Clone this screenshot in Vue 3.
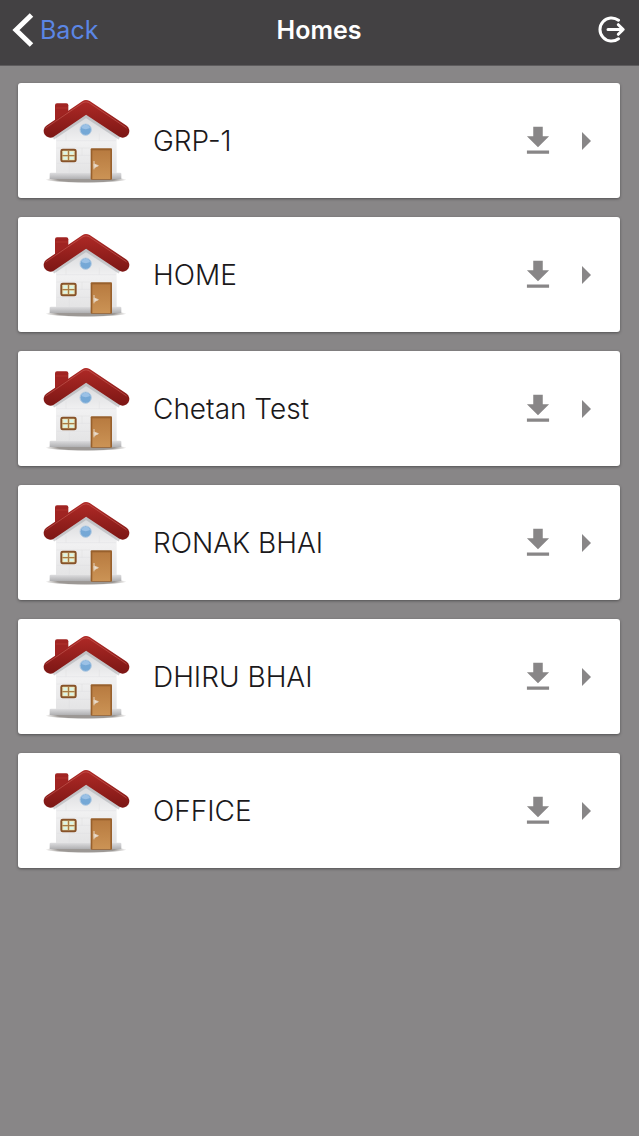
<template>
    <div class="app-container">
        <header class="top-bar">
            <button type="button" class="back-btn" @click="handleBack">
                <svg class="back-icon" viewBox="0 0 22 36" aria-hidden="true">
                    <path d="M19.500 3 4 18l15.500 15" />
                </svg>
                <span>Back</span>
            </button>
            <h1 class="page-title">Homes</h1>
            <button type="button" class="logout-btn" aria-label="Log out" @click="handleLogout">
                <svg viewBox="0 0 28 28" aria-hidden="true">
                    <path d="M20.500 4.200A11.600 11.600 0 1 0 20.500 22.800" />
                    <path d="M10 13.500H25M20.300 8.700l4.900 4.800-4.900 4.800" />
                </svg>
            </button>
        </header>

        <main class="home-list">
            <article v-for="home in homes" :key="home.id" class="home-card">
                <svg class="home-icon" viewBox="21 19 264 264" aria-hidden="true">
                    <defs>
                        <linearGradient :id="`roof-${home.id}`" gradientUnits="userSpaceOnUse" x1="0" y1="27" x2="0"
                            y2="144">
                            <stop offset="0" stop-color="#b02a27" />
                            <stop offset="1" stop-color="#7b1614" />
                        </linearGradient>
                        <linearGradient :id="`wall-${home.id}`" x1="0" y1="0" x2="0" y2="1">
                            <stop offset="0" stop-color="#d3d4d7" />
                            <stop offset="0.500" stop-color="#f1f1f2" />
                            <stop offset="1" stop-color="#e4e4e5" />
                        </linearGradient>
                        <linearGradient :id="`base-${home.id}`" x1="0" y1="0" x2="0" y2="1">
                            <stop offset="0" stop-color="#dedee0" />
                            <stop offset="1" stop-color="#b0b0b2" />
                        </linearGradient>
                        <linearGradient :id="`door-${home.id}`" x1="0" y1="0" x2="0" y2="1">
                            <stop offset="0" stop-color="#b87b40" />
                            <stop offset="1" stop-color="#cb9355" />
                        </linearGradient>
                        <radialGradient :id="`shade-${home.id}`">
                            <stop offset="0.700" stop-color="#9c9895" />
                            <stop offset="1" stop-color="#9c9895" stop-opacity="0" />
                        </radialGradient>
                    </defs>
                    <ellipse cx="150" cy="267" rx="122" ry="10" :fill="`url(#shade-${home.id})`" />
                    <path d="M41 249q0-3 4-3h207q4 0 4 3v16H41z" :fill="`url(#base-${home.id})`" />
                    <path d="M60 120 150 60l92 60v127H60z" :fill="`url(#wall-${home.id})`" />
                    <path d="M62 150h178M62 172h100M124 194h38M62 218h100M90 128v22M190 128v22M138 172v22M100 218v28"
                        fill="none" stroke="#dcdcde" />
                    <path d="M57 91V44q0-6 6-6h28q6 0 6 6v26z" fill="#a02422" />
                    <path d="M59 52h36" stroke="#b83a34" stroke-width="2" />
                    <path d="M46 134 150 64l106 70" fill="none" stroke="#a4a5aa" stroke-opacity="0.500"
                        stroke-width="30" />
                    <path d="M43 121 150 48l110 73" fill="none" :stroke="`url(#roof-${home.id})`" stroke-width="40"
                        stroke-linecap="round" stroke-linejoin="round" />
                    <path d="M29 112 141 36q9-5 18 0l113 76" fill="none" stroke="#cf6a62" stroke-opacity="0.500"
                        stroke-width="3" />
                    <circle cx="149" cy="117" r="17" fill="#75a8d6" stroke="#b3cbe2" stroke-width="3" />
                    <path d="M136 112q3-10 13-10t13 10q-13 7-26 0z" fill="#9bc1e6" />
                    <rect x="73" y="174" width="49" height="41" rx="7" fill="#875228" />
                    <rect x="79" y="180" width="37" height="29" rx="2" fill="#ece9bd" />
                    <path d="M83 183h10v8H83zM102 183h10v8h-10zM83 199h10v7H83zM102 199h10v7h-10z"
                        fill="#d8f3ea" />
                    <path d="M97.500 180v29M79 195h37" stroke="#a87b46" stroke-width="4" />
                    <rect x="164" y="173" width="64" height="94" rx="3" fill="#98602c" />
                    <rect x="169" y="179" width="54" height="86" :fill="`url(#door-${home.id})`" />
                    <path d="M174 211v25M174 220l13 5-12 6z" fill="#eee1d0" stroke="#e3d0bb" stroke-width="3" />
                </svg>
                <h2 class="home-name">{{ home.name }}</h2>
                <button type="button" class="download-btn" :aria-label="`Download ${home.name}`"
                    @click="handleDownload(home)">
                    <svg viewBox="0 0 24 24" aria-hidden="true">
                        <path d="M19 9h-4V3H9v6H5l7 7 7-7zM5 18v2h14v-2z" />
                    </svg>
                </button>
                <button type="button" class="open-btn" :aria-label="`Open ${home.name}`" @click="handleOpen(home)">
                    <svg viewBox="0 0 10 18" aria-hidden="true">
                        <path d="M0 0v18l9-9z" />
                    </svg>
                </button>
            </article>
        </main>
    </div>
</template>

<script setup>
import { ref } from 'vue';

const homes = ref([
    { id: 1, name: 'GRP-1' },
    { id: 2, name: 'HOME' },
    { id: 3, name: 'Chetan Test' },
    { id: 4, name: 'RONAK BHAI' },
    { id: 5, name: 'DHIRU BHAI' },
    { id: 6, name: 'OFFICE' },
]);

const handleBack = () => {
    window.history.back();
};

const handleLogout = () => {
    console.log('Logging out');
};

const handleDownload = (home) => {
    console.log(`Downloading: ${home.name}`);
};

const handleOpen = (home) => {
    console.log(`Opening: ${home.name}`);
};
</script>

<style>
body {
    margin: 0;
    background: #888687;
}
</style>

<style scoped>
.app-container {
    min-height: 100vh;
    background: #888687;
    font-family: Inter, 'Liberation Sans', sans-serif;
}

button {
    padding: 0;
    border: 0;
    background: none;
    font: inherit;
    cursor: pointer;
}

svg {
    display: block;
}

/* Top bar */
.top-bar {
    display: grid;
    grid-template-columns: 1fr auto 1fr;
    align-items: center;
    box-sizing: border-box;
    height: 66px;
    padding: 0 13px 6px 12px;
    background: #434143;
    border-bottom: 1px solid #5d5b5d;
}

.back-btn {
    display: flex;
    align-items: center;
    justify-self: start;
    gap: 6px;
    color: #5b86e5;
    font-size: 25px;
    line-height: 32px;
}

.back-icon {
    width: 22px;
    height: 36px;
    fill: none;
    stroke: #ffffff;
    stroke-width: 5;
}

.page-title {
    margin: 0;
    color: #ffffff;
    font-size: 25px;
    font-weight: 600;
    line-height: 32px;
}

.logout-btn {
    justify-self: end;
}

.logout-btn svg {
    width: 28px;
    height: 28px;
    fill: none;
    stroke: #ffffff;
    stroke-width: 3;
    stroke-linecap: round;
    stroke-linejoin: round;
}

/* Home cards */
.home-list {
    display: flex;
    flex-direction: column;
    gap: 19px;
    padding: 17px 19px 17px 18px;
}

.home-card {
    display: flex;
    align-items: center;
    box-sizing: border-box;
    min-height: 115px;
    padding: 0 28px 0 25px;
    background: #ffffff;
    border-radius: 3px;
    box-shadow: 0 1px 3px rgba(0, 0, 0, 0.4);
}

.home-icon {
    flex: none;
    width: 88px;
    height: 88px;
}

.home-name {
    flex: 1;
    margin: 0 0 0 22px;
    color: #1b191b;
    font-size: 28px;
    font-weight: 300;
    line-height: 32px;
}

.download-btn {
    margin-right: 25px;
}

.download-btn svg {
    width: 38px;
    height: 38px;
    fill: #888687;
}

.open-btn svg {
    width: 10px;
    height: 18px;
    fill: #888687;
}
</style>
